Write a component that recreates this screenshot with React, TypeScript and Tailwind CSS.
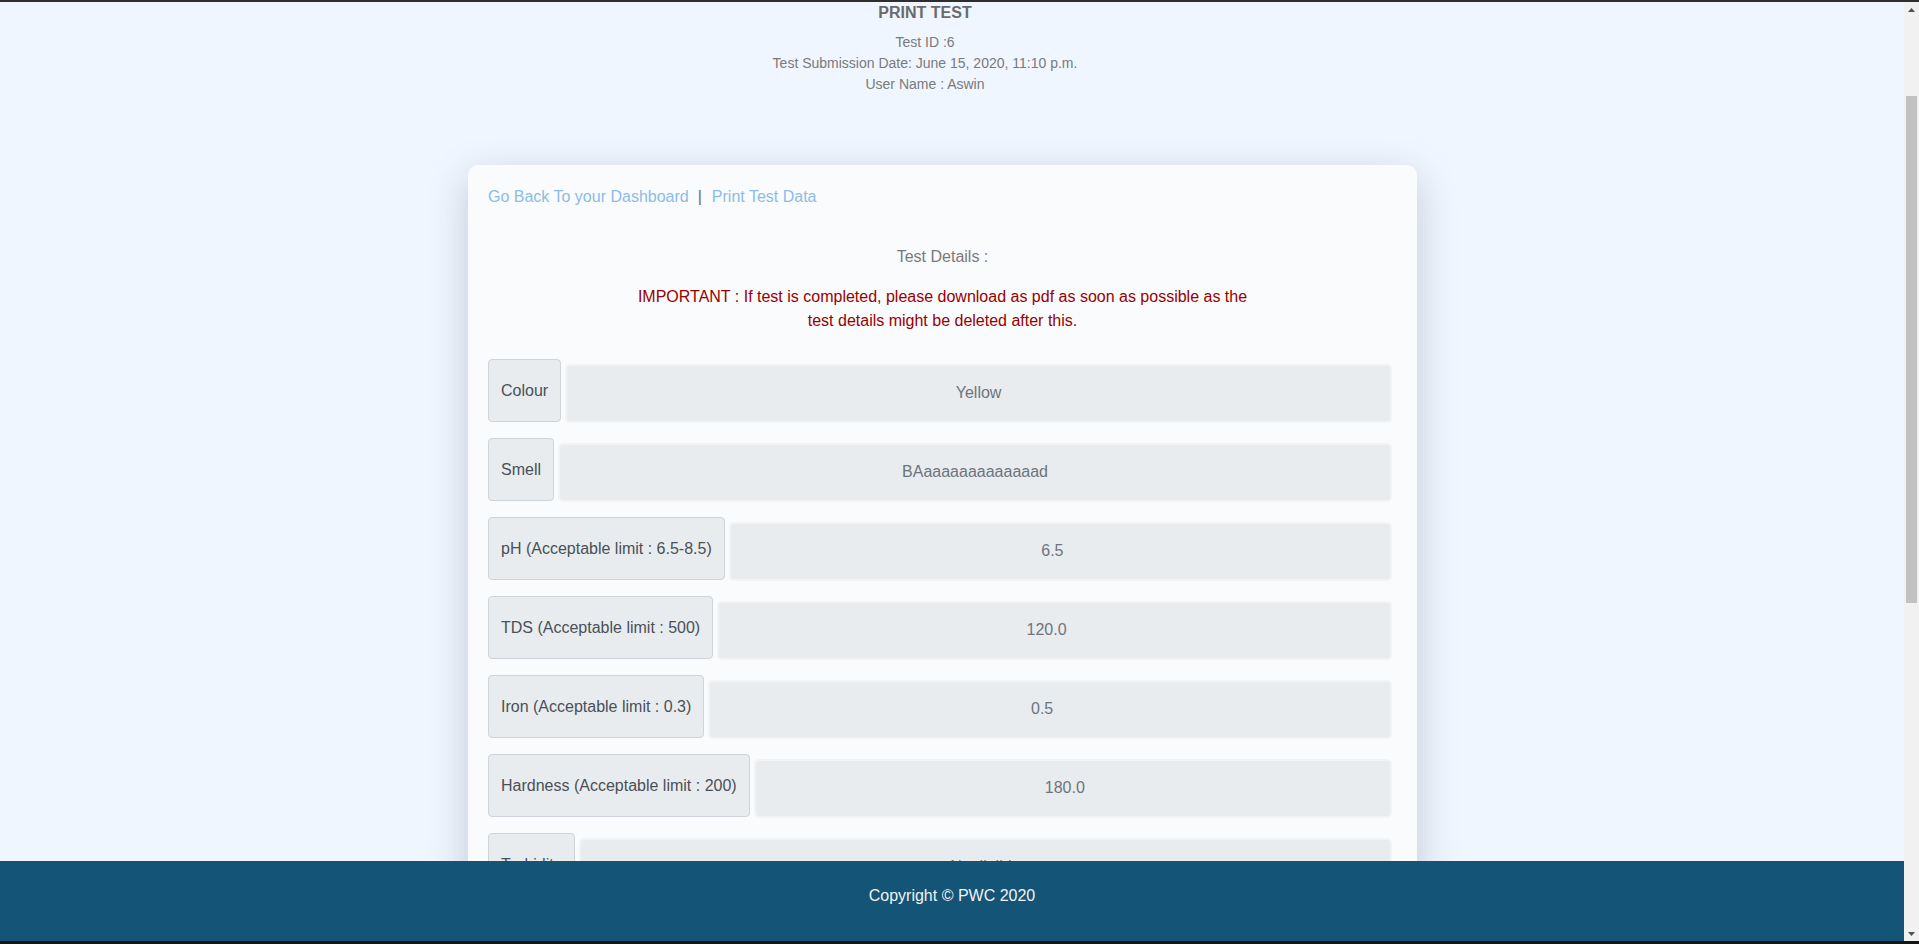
import React from "react";

const rows: { label: string; value: string; shift: boolean }[] = [
  { label: "Colour", value: "Yellow", shift: false },
  { label: "Smell", value: "BAaaaaaaaaaaaaad", shift: false },
  { label: "pH (Acceptable limit : 6.5-8.5)", value: "6.5", shift: true },
  { label: "TDS (Acceptable limit : 500)", value: "120.0", shift: true },
  { label: "Iron (Acceptable limit : 0.3)", value: "0.5", shift: true },
  { label: "Hardness (Acceptable limit : 200)", value: "180.0", shift: true },
  { label: "Turbidity", value: "Negligible", shift: false },
  { label: "Chlorine", value: "0.2", shift: false },
];

export default function App() {
  return (
    <div
      className="flex h-[944px] w-full flex-col overflow-hidden"
      style={{ fontFamily: '"Liberation Sans", Arial, sans-serif' }}
    >
      <div className="h-[2px] w-full shrink-0 bg-[#2e2e2e]" />
      <div className="flex min-h-0 flex-1 flex-row">
        <div className="relative min-w-0 flex-1 overflow-hidden bg-[#eff6ff]">
          <div className="pr-[54px] text-center">
            <h4 className="text-[16px] font-bold leading-[22px] text-[#6a6a6a]">PRINT TEST</h4>
            <div className="mt-[8px] text-[14px] leading-[21px] text-[#7a7a7a]">
              <div>Test ID :6</div>
              <div>Test Submission Date: June 15, 2020, 11:10 p.m.</div>
              <div>User Name : Aswin</div>
            </div>
          </div>

          <div className="ml-[468px] mt-[70px] w-[949px] rounded-[10px] bg-[#f9fbfd] pb-[40px] pl-[20px] pr-[25px] pt-[20px] shadow-[0_12px_40px_rgba(40,50,70,0.22)]">
            <div className="text-[16px] leading-[24px]">
              <a className="text-[#8dbbe6]">Go Back To your Dashboard</a>
              <span className="ml-[9px] mr-[10px] text-[#6a6a6a]">|</span>
              <a className="text-[#8dbbe6]">Print Test Data</a>
            </div>
            <div className="-mr-[5px] mt-[36px] text-center text-[16px] leading-[24px] text-[#7a7a7a]">
              Test Details :
            </div>
            <div className="-mr-[5px] mt-[16px]">
              <p className="mx-auto w-[620px] text-center text-[16px] leading-[24px] text-[#990000]">
                IMPORTANT : If test is completed, please download as pdf as soon as possible as the test details might be deleted after this.
              </p>
            </div>
            <div className="mt-[26px] flex flex-col gap-[15px]">
              {rows.map((r) => (
                <div key={r.label} className="flex h-[64px] flex-row items-start">
                  <div className="flex h-[63px] shrink-0 items-center rounded-[4px] border border-[#ced4da] bg-[#e9ecef] px-[12px] text-[16px] text-[#495057]">
                    {r.label}
                  </div>
                  <div
                    className={
                      r.shift
                        ? "ml-[4px] mt-[5px] flex h-[59px] flex-1 items-center justify-center rounded-[5px] border-2 border-[#f1f3f5] bg-[#e9ecef] pb-[1px] pr-[16px] text-[16px] text-[#6c757d]"
                        : "ml-[4px] mt-[5px] flex h-[59px] flex-1 items-center justify-center rounded-[5px] border-2 border-[#f1f3f5] bg-[#e9ecef] pb-[1px] text-[16px] text-[#6c757d]"
                    }
                  >
                    {r.value}
                  </div>
                </div>
              ))}
            </div>
          </div>

          <footer className="absolute bottom-0 left-0 right-0 h-[80px] bg-[#135477] pt-[23px] text-center text-[16px] leading-[24px] text-[#f2f2f2]">
            Copyright © PWC 2020
          </footer>
        </div>

        <div className="flex w-[15px] shrink-0 flex-col bg-[#f1f1f1]">
          <div className="flex h-[15px] items-center justify-center">
            <svg width="7" height="4" viewBox="0 0 7 4">
              <path d="M3.5 0 L7 4 L0 4 Z" fill="#505050" />
            </svg>
          </div>
          <div className="mt-[79px] ml-[2px] h-[507px] w-[11px] bg-[#c1c1c1]" />
          <div className="flex-1" />
          <div className="flex h-[15px] items-center justify-center">
            <svg width="7" height="4" viewBox="0 0 7 4">
              <path d="M0 0 L7 0 L3.5 4 Z" fill="#505050" />
            </svg>
          </div>
        </div>
      </div>
      <div className="h-[3px] w-full shrink-0 bg-[#151515]" />
    </div>
  );
}
